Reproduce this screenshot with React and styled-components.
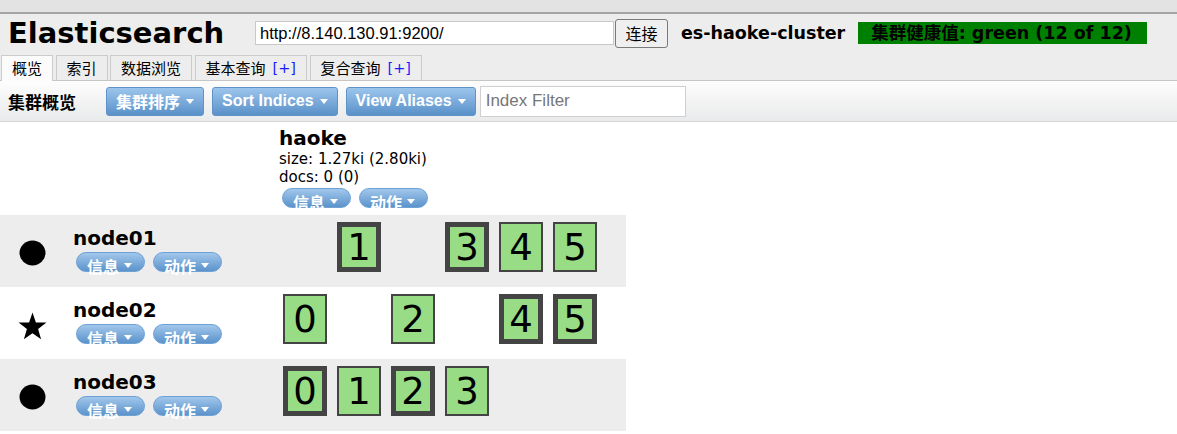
import React from 'react'
import styled, { createGlobalStyle, css } from 'styled-components'

const SANS = `"DejaVu Sans", Verdana, "Noto Sans CJK SC", sans-serif`
const ARIAL = `"Liberation Sans", Arial, "Noto Sans CJK SC", sans-serif`

const nodes = [
   { name: 'node01', master: false, shards: [null, 'p', null, 'p', 'r', 'r'] },
   { name: 'node02', master: true, shards: ['r', null, 'r', null, 'p', 'p'] },
   { name: 'node03', master: false, shards: ['p', 'r', 'p', 'r'] },
]

const tabs = [
   { label: '概览', active: true },
   { label: '索引' },
   { label: '数据浏览' },
   { label: '基本查询', plus: true },
   { label: '复合查询', plus: true },
]

const Caret = () => (
   <svg width="8" height="5" viewBox="0 0 8 5">
      <path d="M0 0 L8 0 L4 5 Z" fill="#fff" />
   </svg>
)

const Circle = () => (
   <svg width="27" height="26" viewBox="0 0 27 26">
      <ellipse cx="13.5" cy="13" rx="13" ry="12.5" fill="#000" />
   </svg>
)

const Star = () => (
   <svg width="29" height="28" viewBox="0 0 28 27">
      <path d="M14 0.5 L17.3 10 L27.5 10.2 L19.4 16.4 L22.3 26.3 L14 20.4 L5.7 26.3 L8.6 16.4 L0.5 10.2 L10.7 10 Z" fill="#000" />
   </svg>
)

const PillPair = () => (
   <Pills>
      <Pill>信息 <Caret /></Pill>
      <Pill>动作 <Caret /></Pill>
   </Pills>
)

export default function App() {
   return (
      <>
         <GlobalStyle />
         <TopStrip />
         <Header>
            <HeaderRow>
               <Title>Elasticsearch</Title>
               <UrlInput defaultValue="http://8.140.130.91:9200/" />
               <ConnectButton>连接</ConnectButton>
               <ClusterName>es-haoke-cluster</ClusterName>
               <Health>集群健康值: green (12 of 12)</Health>
            </HeaderRow>
            <TabBar>
               {tabs.map(t => (
                  <Tab key={t.label} $active={t.active}>
                     {t.label}
                     {t.plus && <Plus>[+]</Plus>}
                  </Tab>
               ))}
            </TabBar>
         </Header>
         <Toolbar>
            <ToolbarLabel>集群概览</ToolbarLabel>
            <MenuButton>集群排序 <Caret /></MenuButton>
            <MenuButton>Sort Indices <Caret /></MenuButton>
            <MenuButton>View Aliases <Caret /></MenuButton>
            <FilterInput placeholder="Index Filter" />
         </Toolbar>
         <Overview>
            <HeadRow>
               <IconCell />
               <NameCell />
               <IndexCell>
                  <IndexName>haoke</IndexName>
                  <IndexStat>size: 1.27ki (2.80ki)</IndexStat>
                  <IndexStat>docs: 0 (0)</IndexStat>
                  <PillPair />
               </IndexCell>
            </HeadRow>
            {nodes.map((n, i) => (
               <NodeRow key={n.name} $shaded={i % 2 === 0}>
                  <IconCell>{n.master ? <Star /> : <Circle />}</IconCell>
                  <NameCell>
                     <NodeName>{n.name}</NodeName>
                     <PillPair />
                  </NameCell>
                  <ShardCell>
                     {n.shards.map((s, k) =>
                        s ? (
                           <Shard key={k} $primary={s === 'p'}>{k}</Shard>
                        ) : (
                           <ShardGap key={k} />
                        )
                     )}
                  </ShardCell>
               </NodeRow>
            ))}
         </Overview>
      </>
   )
}

const GlobalStyle = createGlobalStyle`
   body {
      margin: 0;
      background: #fff;
      font-family: ${SANS};
      color: #000;
   }
`

const TopStrip = styled.div`
   height: 12px;
   background: #e3e3e3;
   border-bottom: 2px solid #a4a4a4;
`

const Header = styled.div`
   background: #ededed;
`

const HeaderRow = styled.div`
   display: flex;
   align-items: center;
   height: 38px;
   padding-left: 8px;
`

const Title = styled.h1`
   margin: 0;
   font-size: 29px;
   font-weight: bold;
   line-height: 1;
   width: 247px;
`

const UrlInput = styled.input`
   box-sizing: border-box;
   width: 359px;
   height: 24px;
   padding: 0 4px;
   border: 1px solid #c9c9c9;
   background: #fff;
   font-family: ${ARIAL};
   font-size: 16.5px;
   color: #000;
   outline: none;
`

const ConnectButton = styled.button`
   box-sizing: border-box;
   height: 29px;
   width: 53px;
   margin-left: 1px;
   padding: 0;
   border: 1px solid #7a7a7a;
   border-radius: 3px;
   background: #efefef;
   font-family: "Noto Sans CJK SC", sans-serif;
   font-size: 16px;
   color: #000;
`

const ClusterName = styled.span`
   margin-left: 13px;
   font-size: 17.5px;
   font-weight: bold;
`

const Health = styled.span`
   box-sizing: border-box;
   margin-left: 13px;
   width: 289px;
   height: 22px;
   padding-left: 13px;
   background: #008000;
   font-size: 17.5px;
   font-weight: bold;
   line-height: 22px;
`

const TabBar = styled.div`
   display: flex;
   align-items: flex-end;
   gap: 2.5px;
   height: 25px;
   margin-top: 3px;
   padding-left: 1px;
`

const Tab = styled.div`
   box-sizing: border-box;
   display: flex;
   gap: 7px;
   height: 25px;
   padding: 0 10px;
   border: 1px solid #cbcbcb;
   border-bottom: none;
   background: #ededed;
   font-family: "Noto Sans CJK SC", sans-serif;
   font-size: 15px;
   line-height: 24px;
   white-space: nowrap;
   ${p =>
      p.$active &&
      css`
         background: #fbfbfb;
         position: relative;
         z-index: 1;
         height: 26px;
         margin-bottom: -1px;
      `}
`

const Plus = styled.span`
   color: #1a1aff;
   font-family: ${SANS};
   font-size: 14.5px;
`

const Toolbar = styled.div`
   display: flex;
   align-items: center;
   height: 40px;
   padding-left: 8px;
   border-top: 1px solid #c6c6c6;
   border-bottom: 1px solid #d3d3d3;
   background: linear-gradient(#fdfdfd, #e9eaeb);
`

const ToolbarLabel = styled.span`
   font-family: "Noto Sans CJK SC", sans-serif;
   font-size: 17px;
   font-weight: bold;
   width: 98px;
`

const MenuButton = styled.button`
   box-sizing: border-box;
   display: flex;
   align-items: center;
   gap: 6px;
   height: 29px;
   margin-right: 8px;
   padding: 0 9px;
   border: 1px solid #5f93c8;
   border-radius: 3px;
   background: linear-gradient(#9cc5ec, #5a91c9);
   color: #fff;
   font-family: ${ARIAL};
   font-size: 16px;
   font-weight: bold;
`

const FilterInput = styled.input`
   box-sizing: border-box;
   width: 206px;
   height: 31px;
   margin-left: -4px;
   padding: 0 5px;
   border: 1px solid #cfcfcf;
   background: #fff;
   font-family: ${ARIAL};
   font-size: 17px;
   outline: none;
   &::placeholder {
      color: #777;
   }
`

const Overview = styled.div`
   width: 626px;
`

const HeadRow = styled.div`
   display: flex;
   height: 93px;
   background: #fff;
   overflow: hidden;
`

const NodeRow = styled.div`
   display: flex;
   height: 72px;
   background: ${p => (p.$shaded ? '#ededed' : '#fff')};
`

const IconCell = styled.div`
   display: flex;
   justify-content: center;
   align-items: flex-start;
   width: 64px;
   padding-top: 25px;
   box-sizing: border-box;
`

const NameCell = styled.div`
   box-sizing: border-box;
   width: 215px;
   padding: 11px 0 0 9px;
`

const NodeName = styled.div`
   font-size: 20px;
   font-weight: bold;
   line-height: 24px;
   margin-bottom: 2px;
`

const IndexCell = styled.div`
   padding-top: 4px;
`

const IndexName = styled.div`
   font-size: 20px;
   font-weight: bold;
   line-height: 24px;
`

const IndexStat = styled.div`
   font-size: 15px;
   line-height: 18px;
`

const Pills = styled.div`
   display: flex;
   gap: 8px;
   margin-top: 2px;
   padding-left: 3px;
`

const Pill = styled.span`
   box-sizing: border-box;
   display: flex;
   align-items: flex-start;
   gap: 5px;
   width: 69px;
   height: 20px;
   padding: 5px 0 0 10px;
   border: 1px solid #6ea1d4;
   border-radius: 10px;
   background: linear-gradient(#a1c7ec, #5b93cb);
   color: #fff;
   font-family: "Noto Sans CJK SC", sans-serif;
   font-size: 16px;
   font-weight: bold;
   line-height: 16px;
   white-space: nowrap;
   svg {
      margin-top: 5px;
   }
`

const ShardCell = styled.div`
   display: flex;
   gap: 10px;
   padding: 7px 0 0 4px;
`

const Shard = styled.div`
   box-sizing: border-box;
   display: flex;
   align-items: center;
   justify-content: center;
   width: 44px;
   height: 50px;
   border: ${p => (p.$primary ? 5 : 2)}px solid #444;
   background: #98dc85;
   font-size: 37px;
   line-height: 1;
`

const ShardGap = styled.div`
   width: 44px;
`
